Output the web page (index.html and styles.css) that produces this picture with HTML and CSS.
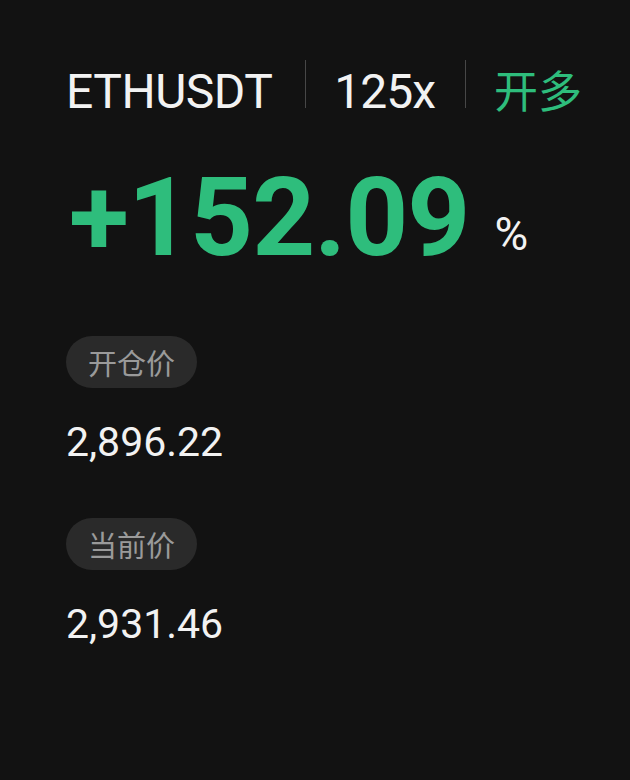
FILE: index.html
```html
<!DOCTYPE html>
<html lang="zh-CN">
<head>
<meta charset="utf-8">
<title>ETHUSDT</title>
<link rel="stylesheet" href="styles.css">
</head>
<body>
<main class="card">
  <div class="header">
    <span class="symbol">ETHUSDT</span>
    <span class="divider"></span>
    <span class="lev">125x</span>
    <span class="divider"></span>
    <span class="side">开多</span>
  </div>
  <div class="pnl">
    <span class="pnl-num">+152.09</span>
    <span class="pnl-unit">%</span>
  </div>
  <div class="field">
    <span class="pill">开仓价</span>
    <div class="value">2,896.22</div>
  </div>
  <div class="field field-second">
    <span class="pill">当前价</span>
    <div class="value">2,931.46</div>
  </div>
</main>
</body>
</html>
```
FILE: styles.css
```css
html, body {
  margin: 0;
  padding: 0;
  background: #121212;
}

body {
  width: 630px;
  height: 780px;
  overflow: hidden;
  font-family: Roboto, "Noto Sans CJK SC", sans-serif;
  color: #f2f2f2;
}

.card {
  padding: 60px 0 0 66px;
}

.header {
  display: flex;
  align-items: baseline;
}

.symbol,
.lev {
  font-size: 48px;
  line-height: 48px;
  font-weight: 400;
  letter-spacing: -0.5px;
}

.lev {
  letter-spacing: -1px;
}

.divider {
  width: 1px;
  height: 48px;
  background: #474747;
  margin: 0 28px 0 33px;
}

.lev + .divider {
  margin: 0 28px 0 30px;
}

.side {
  font-family: "Noto Sans CJK SC", sans-serif;
  font-size: 44px;
  line-height: 48px;
  color: #2ebd7c;
}

.pnl {
  display: flex;
  align-items: baseline;
  margin: 47px 0 0 3px;
}

.pnl-num {
  font-size: 110px;
  line-height: 110px;
  font-weight: 700;
  letter-spacing: -1px;
  color: #2ebd7c;
}

.pnl-unit {
  font-size: 46px;
  line-height: 46px;
  margin-left: 25px;
  color: #f2f2f2;
  position: relative;
  top: -5px;
}

.field {
  margin-top: 63px;
}

.pill {
  display: inline-block;
  height: 52px;
  line-height: 52px;
  padding: 0 22px;
  border-radius: 26px;
  background: #2a2a2a;
  color: #9a9a9a;
  font-family: "Noto Sans CJK SC", sans-serif;
  font-size: 29px;
}

.value {
  font-size: 41px;
  line-height: 48px;
  margin-top: 30px;
  color: #f2f2f2;
}

.field-second {
  margin-top: 52px;
}
```
